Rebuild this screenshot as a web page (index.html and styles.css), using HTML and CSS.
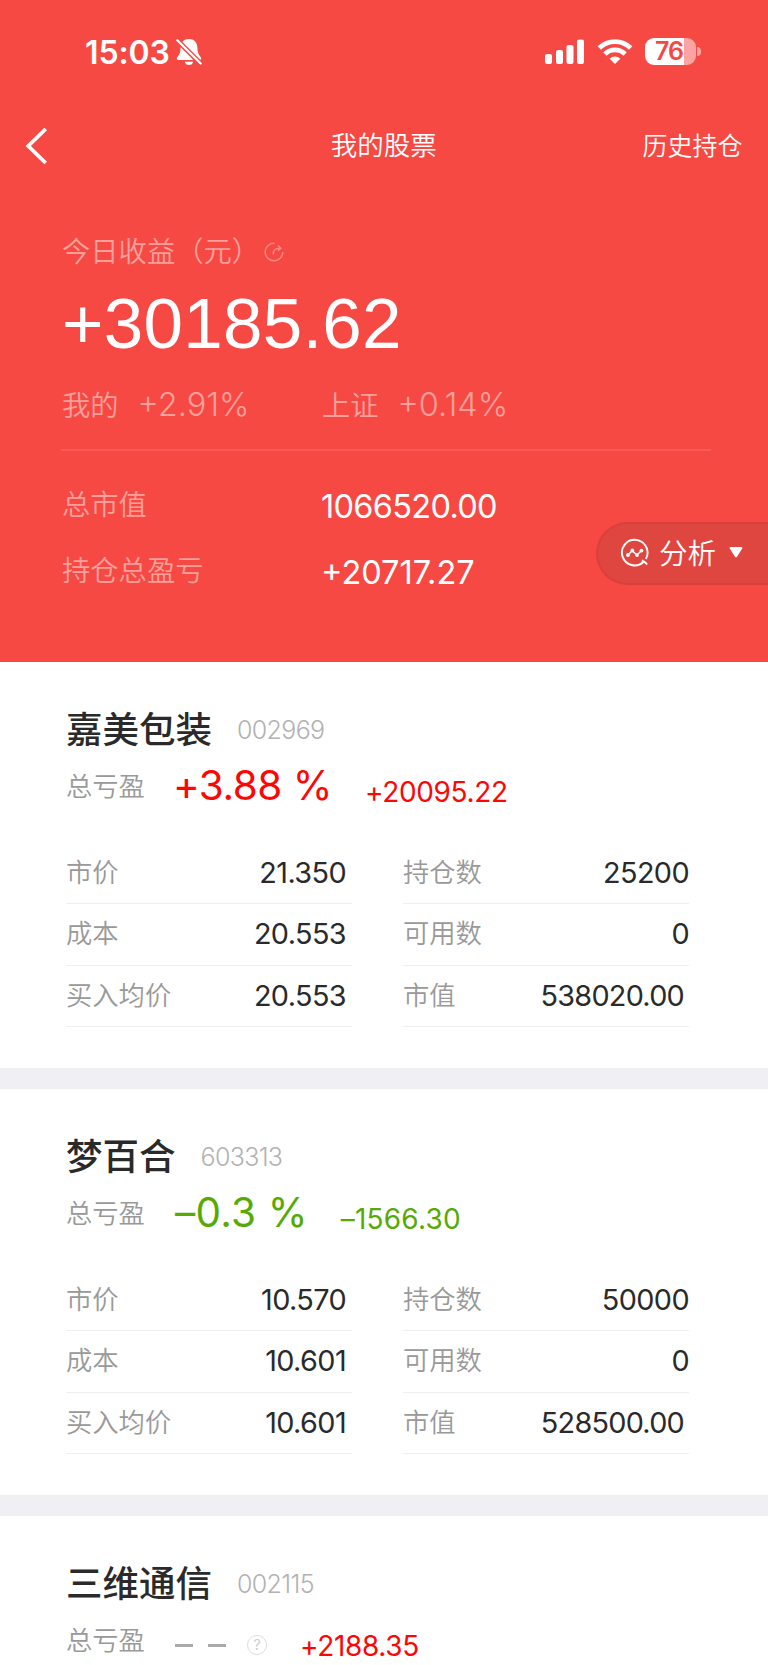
FILE: index.html
```html
<!DOCTYPE html>
<html lang="zh-CN">
<head>
    <meta charset="UTF-8">
    <meta name="viewport" content="width=device-width, initial-scale=1.0">
    <title>我的股票</title>
    <link rel="stylesheet" href="styles.css">
</head>
<body>
    <header class="header">
        <div class="status-bar">
            <span class="time">15:03</span>
            <svg class="bell" width="26" height="28" viewBox="0 0 26 28">
                <path fill="#fff" d="M13 1c5 0 8.200 3.200 8.400 8.500.1 5 1.200 7.200 3.400 9.700.8 1 .4 2.800-1 2.800H2.300c-1.500 0-1.900-1.700-1-2.700 2.200-2.600 3.200-4.800 3.300-9.800C4.800 4.200 8 1 13 1z"/>
                <path fill="#fff" d="M8.800 23.700h8.400c-.3 2-2 3.300-4.200 3.300s-3.900-1.300-4.200-3.300z"/>
                <path stroke="#f64944" stroke-width="5" d="M0 1l26 26"/>
                <path stroke="#fff" stroke-width="2.200" stroke-linecap="round" d="M1.300 2.300l23.400 23.200"/>
            </svg>
            <svg class="signal" width="40" height="26" viewBox="0 0 40 26" fill="#fff">
                <rect x="0" y="15" width="7" height="10" rx="2"/>
                <rect x="11" y="11" width="7" height="14" rx="2"/>
                <rect x="21.500" y="6" width="7" height="19" rx="2"/>
                <rect x="32" y="0.500" width="7" height="24.500" rx="2"/>
            </svg>
            <svg class="wifi" width="36" height="26" viewBox="0 0 36 26">
                <g fill="none" stroke="#fff" stroke-width="4.800">
                    <path d="M2.300 9a22.500 22.500 0 0 1 31.400 0"/>
                    <path d="M7.900 15a14.600 14.600 0 0 1 20.200 0"/>
                </g>
                <path fill="#fff" d="M18 25l-5.300-5.300a7.800 7.800 0 0 1 10.600 0z"/>
            </svg>
            <div class="battery"><span>76</span></div>
            <i class="battery-cap"></i>
        </div>

        <nav class="nav">
            <svg class="back" width="24" height="38" viewBox="0 0 24 38">
                <path fill="none" stroke="#fff" stroke-width="3.800" d="M21.700 2L4.300 19l17.400 17"/>
            </svg>
            <h1>我的股票</h1>
            <a class="history">历史持仓</a>
        </nav>

        <div class="today-label">今日收益（元）
            <svg class="refresh" width="20" height="20" viewBox="0 0 20 20" fill="none" stroke="#fff" stroke-width="1.500">
                <path d="M10.500 1.200A8.800 8.800 0 1 0 18.800 10"/>
                <path d="M9.500 12.500c-.8-4 2-6.500 6.500-6.300M14 3.500l2.800 2.700L14 8.800"/>
            </svg>
        </div>
        <div class="today-value">+30185.62</div>
        <div class="compare">
            <div class="col"><span class="label">我的</span><span class="rate">+2.91%</span></div>
            <div class="col"><span class="label">上证</span><span class="rate">+0.14%</span></div>
        </div>
        <div class="totals">
            <div class="total"><span class="label">总市值</span><span class="num">1066520.00</span></div>
            <div class="total"><span class="label">持仓总盈亏</span><span class="num">+20717.27</span></div>
        </div>

        <div class="analysis">
            <svg width="30" height="30" viewBox="0 0 30 30" fill="none" stroke="#fff" stroke-width="1.900">
                <path d="M23.400 24A12.800 12.800 0 1 1 25.800 21M21.800 22.500q2.800.8 5.400 4"/>
                <path stroke-width="1.500" d="M8 17l4.200-4.200 4.800 4.200 4.600-4.500"/>
                <g fill="#fff" stroke="none"><circle cx="8" cy="17" r="1.900"/><circle cx="12.300" cy="12.500" r="1.900"/><circle cx="17" cy="17" r="1.900"/><circle cx="21.500" cy="12.600" r="1.900"/></g>
            </svg>
            <span>分析</span>
            <svg class="arrow" width="14" height="11" viewBox="0 0 14 11"><path fill="#fff" d="M1.500 0h11q1.500.3.700 1.600L8 9.800q-1 1.200-2 0L.8 1.600Q0 .3 1.500 0z"/></svg>
        </div>
    </header>

    <section class="stock">
        <div class="name-row"><h2>嘉美包装</h2><span class="code">002969</span></div>
        <div class="profit up">
            <span class="label">总亏盈</span><span class="pct">+3.88 %</span><span class="amount">+20095.22</span>
        </div>
        <div class="details">
            <div class="item"><span class="label">市价</span><span class="num">21.350</span></div>
            <div class="item"><span class="label">持仓数</span><span class="num">25200</span></div>
            <div class="item"><span class="label">成本</span><span class="num">20.553</span></div>
            <div class="item"><span class="label">可用数</span><span class="num">0</span></div>
            <div class="item"><span class="label">买入均价</span><span class="num">20.553</span></div>
            <div class="item"><span class="label">市值</span><span class="num value">538020.00</span></div>
        </div>
    </section>

    <section class="stock">
        <div class="name-row"><h2>梦百合</h2><span class="code">603313</span></div>
        <div class="profit down">
            <span class="label">总亏盈</span><span class="pct">–0.3 %</span><span class="amount">–1566.30</span>
        </div>
        <div class="details">
            <div class="item"><span class="label">市价</span><span class="num">10.570</span></div>
            <div class="item"><span class="label">持仓数</span><span class="num">50000</span></div>
            <div class="item"><span class="label">成本</span><span class="num">10.601</span></div>
            <div class="item"><span class="label">可用数</span><span class="num">0</span></div>
            <div class="item"><span class="label">买入均价</span><span class="num">10.601</span></div>
            <div class="item"><span class="label">市值</span><span class="num value">528500.00</span></div>
        </div>
    </section>

    <section class="stock last">
        <div class="name-row"><h2>三维通信</h2><span class="code">002115</span></div>
        <div class="profit up">
            <span class="label">总亏盈</span><span class="dash"></span><span class="dash"></span>
            <span class="help">?</span><span class="amount">+2188.35</span>
        </div>
    </section>
</body>
</html>
```

FILE: styles.css
```css
* { box-sizing: border-box; margin: 0; padding: 0; }
body { width: 768px; height: 1665px; overflow: hidden; background: #fff; color: #2a2a2a; font-family: Inter, "Noto Sans CJK SC", sans-serif; white-space: nowrap; }
svg { display: block; flex: none; }
.label { font-family: "Noto Sans CJK SC", sans-serif; font-weight: 350; }

.header { position: relative; height: 662px; background: #f64944; color: #fff; }

.status-bar { display: flex; align-items: center; height: 104px; padding-left: 85px; }
.time { width: 91px; font-size: 32px; font-weight: 600; letter-spacing: -0.1px; }
.signal { margin-left: 343px; }
.wifi { margin-left: 12px; }
.battery { width: 51px; height: 27px; margin: -1px 0 0 12px; border-radius: 9px; background: linear-gradient(to right, #fff 39px, #fba4a1 39px); color: #f64944; font-size: 25px; font-weight: 600; line-height: 27px; padding-left: 10px; letter-spacing: -1px; }
.battery-cap { width: 4px; height: 9px; margin: -1px 0 0 1px; border-radius: 0 5px 5px 0; background: #fba4a1; }

.nav { display: grid; grid-template-columns: 1fr auto 1fr; align-items: center; height: 84px; padding: 0 25.500px 0 24px; font-family: "Noto Sans CJK SC", sans-serif; }
.nav h1 { padding: 0 0 5px 1px; font-size: 26.500px; font-weight: 350; }
.history { justify-self: end; padding-bottom: 4px; font-size: 25px; font-weight: 350; }

.today-label { display: flex; align-items: center; height: 40px; margin: 41px 0 0 62px; font-family: "Noto Sans CJK SC", sans-serif; font-size: 28.300px; font-weight: 350; color: #fca09c; }
.refresh { margin: 6px 0 0 4px; opacity: .35; }
.today-value { height: 80px; margin: 15px 0 0 62px; font: 71px/80px "Liberation Sans", sans-serif; letter-spacing: 0.25px; }
.compare { display: flex; height: 67px; margin: 20px 57px 0 61px; border-bottom: 2px solid #f95a55; }
.col { display: flex; align-items: center; width: 260px; height: 40px; }
.header .label { padding-left: 1px; font-size: 28.300px; color: #fca09c; }
.col .label { padding-bottom: 1px; }
.rate { margin-left: 19px; font-size: 32.500px; font-weight: 300; color: #fca09c; }
.totals { padding: 22px 0 0 61px; }
.total { display: flex; align-items: center; height: 66px; }
.total .label { width: 260px; padding-bottom: 7px; }
.total .num { font-size: 32.500px; font-weight: 370; letter-spacing: -0.7px; }
.total:last-child .num { letter-spacing: 0; }

.analysis { position: absolute; top: 522px; right: 0; display: flex; align-items: center; width: 172px; height: 63px; padding: 0 0 2px 22px; border: 2px solid #d9403c; border-right: 0; border-radius: 32px 0 0 32px; background: #df463f; font-family: "Noto Sans CJK SC", sans-serif; font-size: 28.500px; font-weight: 350; }
.analysis span { margin-left: 9px; padding-bottom: 3px; }
.arrow { margin-left: 13px; }

.stock { height: 427px; padding: 41px 78px 0 66px; border-bottom: 21px solid #efeff4; }
.last { height: 149px; border: 0; }
.name-row { display: flex; align-items: center; height: 53px; }
h2 { padding-bottom: 4px; font-family: "Noto Sans CJK SC", sans-serif; font-size: 36.500px; font-weight: 500; }
.code { margin-left: 25px; padding-top: 1px; font-size: 25px; font-weight: 300; color: #b2b2b2; letter-spacing: -0.65px; }
.stock .label { font-size: 26.300px; color: #999; }
.profit { display: flex; align-items: center; height: 58px; }
.profit .label { width: 109px; padding-bottom: 1px; }
.pct { font-size: 40.500px; font-weight: 380; letter-spacing: -0.5px; }
.amount { margin: 13px 0 0 33px; font-size: 28px; font-weight: 380; letter-spacing: -0.35px; }
.up { color: #fd0606; }
.up .pct { margin-left: -2px; }
.down { color: #57aa04; }
.down .pct { letter-spacing: 0.2px; }
.down .amount { letter-spacing: 0.2px; }
.dash { width: 18px; height: 3px; margin: 12px 15px 0 0; background: #aaa; }
.help { width: 20px; height: 20px; margin: 11px 0 0 6px; border: 1.500px solid #ddd; border-radius: 50%; color: #ccc; font-size: 14px; line-height: 18px; text-align: center; }
.details { display: grid; grid-template-columns: 286px 286px; column-gap: 51px; padding-top: 29px; }
.item { display: flex; align-items: center; justify-content: space-between; height: 61.330px; border-bottom: 1.500px solid #f0f0f0; }
.item .label { padding-bottom: 5px; }
.item .num { padding-bottom: 1px; font-size: 28.800px; font-weight: 380; letter-spacing: -0.6px; }
.item:nth-child(odd) .num { margin-right: 6px; }
.item .value.num { margin-right: 5px; letter-spacing: -0.75px; }
```
